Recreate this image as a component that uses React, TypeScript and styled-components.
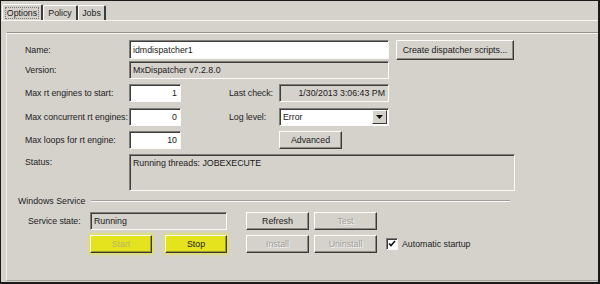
import React from "react";
import styled, { createGlobalStyle, css } from "styled-components";

const GlobalStyle = createGlobalStyle`
  html, body { margin: 0; padding: 0; background: #d5d2cc; }
  body { font-family: "Liberation Sans", Arial, sans-serif; font-size: 8.8px; color: #1a1a1a; }
  * { box-sizing: border-box; }
`;

const BG = "#d5d2cc";

const Window = styled.div`
  width: 600px;
  height: 284px;
  background: ${BG};
  border-style: solid;
  border-color: #1a1a1a;
  border-width: 1px 2px 2px 1px;
  display: flex;
  flex-direction: column;
`;

const TabStrip = styled.div`
  height: 19px;
  display: flex;
  align-items: flex-end;
  padding-left: 1px;
`;

const Tab = styled.div<{ $w: number; $active?: boolean }>`
  width: ${(p) => p.$w}px;
  height: ${(p) => (p.$active ? 16 : 15)}px;
  display: flex;
  align-items: center;
  justify-content: center;
  border-top: 1px solid #fff;
  border-left: 1px solid #fff;
  border-right: 2px solid #3c3c3c;
  border-radius: 2px 2px 0 0;
  color: #1a1a1a;
  ${(p) =>
    p.$active &&
    css`
      span {
        outline: 1px dotted #777;
        outline-offset: 0px;
        padding: 0 1px;
      }
    `}
`;

const TabPage = styled.div`
  flex: 1;
  display: flex;
  border-top: 1px solid #f7f6f3;
  padding: 11px 0 1px 5px;
`;

const Frame = styled.div`
  flex: 1;
  border-top: 1px solid #93918b;
  border-left: 1px solid #f2f1ee;
  border-bottom: 1px solid #a6a39d;
  box-shadow: inset 0 1px 0 #f7f6f3;
  padding: 7px 0 0 18px;
  display: flex;
  flex-direction: column;
`;

const Row = styled.div<{ $mt?: number; $h?: number; $top?: boolean; $ml?: number }>`
  display: flex;
  align-items: ${(p) => (p.$top ? "flex-start" : "center")};
  height: ${(p) => p.$h ?? 18}px;
  margin-top: ${(p) => p.$mt ?? 0}px;
  margin-left: ${(p) => p.$ml ?? 0}px;
  flex-shrink: 0;
`;

const Label = styled.div<{ $w: number; $ml?: number }>`
  width: ${(p) => p.$w}px;
  margin-left: ${(p) => p.$ml ?? 0}px;
  flex-shrink: 0;
  line-height: 16px;
  color: #222;
  white-space: nowrap;
  letter-spacing: -0.05px;
`;

const Field = styled.div<{ $w: number; $h?: number; $ro?: boolean; $right?: boolean; $ml?: number }>`
  width: ${(p) => p.$w}px;
  height: ${(p) => p.$h ?? 18}px;
  margin-left: ${(p) => p.$ml ?? 0}px;
  flex-shrink: 0;
  background: ${(p) => (p.$ro ? BG : "#fff")};
  border-top: 1px solid #7e7c78;
  border-left: 1px solid #7e7c78;
  border-bottom: 1px solid #fbfaf8;
  border-right: 1px solid #fbfaf8;
  box-shadow: inset 1px 1px 0 #3f3e3c;
  display: flex;
  align-items: ${(p) => (p.$h && p.$h > 24 ? "flex-start" : "center")};
  justify-content: ${(p) => (p.$right ? "flex-end" : "flex-start")};
  padding: ${(p) => (p.$h && p.$h > 24 ? "3px 3px 0 3px" : "0 3px")};
  color: #1a1a1a;
  white-space: nowrap;
  overflow: hidden;
`;

const Button = styled.div<{ $w: number; $h?: number; $ml?: number; $disabled?: boolean; $hl?: boolean }>`
  width: ${(p) => p.$w}px;
  height: ${(p) => p.$h ?? 18}px;
  margin-left: ${(p) => p.$ml ?? 0}px;
  flex-shrink: 0;
  background: ${(p) => (p.$hl ? "#e4e31e" : BG)};
  border-top: 1px solid #fdfdfb;
  border-left: 1px solid #fdfdfb;
  border-right: 1px solid #3a3a38;
  border-bottom: 1px solid #3a3a38;
  box-shadow: inset -1px -1px 0 #8c8a85;
  display: flex;
  align-items: center;
  justify-content: center;
  color: ${(p) => (p.$disabled ? (p.$hl ? "#b9b765" : "#a3a19b") : "#1a1a1a")};
  text-shadow: ${(p) => (p.$disabled && !p.$hl ? "1px 1px 0 #f4f3f0" : "none")};
  ${(p) =>
    p.$hl &&
    css`
      box-shadow: inset -1px -1px 0 #9a992a, 0 0 3px 1px #e8e63a;
    `}
  white-space: nowrap;
`;

const Select = styled(Field)`
  padding-right: 1px;
  justify-content: space-between;
`;

const DropBtn = styled.div`
  width: 15px;
  height: 14px;
  background: ${BG};
  border-top: 1px solid #fdfdfb;
  border-left: 1px solid #fdfdfb;
  border-right: 1px solid #3a3a38;
  border-bottom: 1px solid #3a3a38;
  display: flex;
  align-items: center;
  justify-content: center;
`;

const GroupHeader = styled.div`
  display: flex;
  align-items: center;
  height: 12px;
  width: 492px;
  margin-top: 4px;
  margin-left: -7px;
  flex-shrink: 0;
  color: #222;
`;

const GroupLine = styled.div`
  flex: 1;
  margin-left: 6px;
  border-top: 1px solid #a19f99;
  border-bottom: 1px solid #fbfaf8;
`;

const Check = styled.div`
  width: 12px;
  height: 12px;
  margin-left: 9px;
  flex-shrink: 0;
  background: #fff;
  border-top: 1px solid #7e7c78;
  border-left: 1px solid #7e7c78;
  border-bottom: 1px solid #fbfaf8;
  border-right: 1px solid #fbfaf8;
  box-shadow: inset 1px 1px 0 #3f3e3c;
  display: flex;
  align-items: center;
  justify-content: center;
`;

const CheckText = styled.span`
  margin-left: 4px;
  color: #222;
`;

export default function App() {
  return (
    <>
      <GlobalStyle />
      <Window>
        <TabStrip>
          <Tab $w={41} $active>
            <span>Options</span>
          </Tab>
          <Tab $w={35}>Policy</Tab>
          <Tab $w={28}>Jobs</Tab>
        </TabStrip>
        <TabPage>
          <Frame>
            <Row $h={19}>
              <Label $w={104}>Name:</Label>
              <Field $w={260} $h={19}>idmdispatcher1</Field>
              <Button $w={118} $h={20} $ml={7}>Create dispatcher scripts...</Button>
            </Row>
            <Row $mt={2}>
              <Label $w={104}>Version:</Label>
              <Field $w={260} $ro>MxDispatcher v7.2.8.0</Field>
            </Row>
            <Row $mt={5}>
              <Label $w={104}>Max rt engines to start:</Label>
              <Field $w={52} $right>1</Field>
              <Label $w={50} $ml={48}>Last check:</Label>
              <Field $w={110} $ro $right>1/30/2013 3:06:43 PM</Field>
            </Row>
            <Row $mt={6}>
              <Label $w={104}>Max concurrent rt engines:</Label>
              <Field $w={52} $right>0</Field>
              <Label $w={50} $ml={48}>Log level:</Label>
              <Select $w={110}>
                <span>Error</span>
                <DropBtn>
                  <svg width="7" height="4" viewBox="0 0 7 4">
                    <path d="M0 0h7L3.5 4z" fill="#111" />
                  </svg>
                </DropBtn>
              </Select>
            </Row>
            <Row $mt={5}>
              <Label $w={104}>Max loops for rt engine:</Label>
              <Field $w={52} $right>10</Field>
              <Button $w={63} $ml={98}>Advanced</Button>
            </Row>
            <Row $mt={5} $h={37} $top>
              <Label $w={104}>Status:</Label>
              <Field $w={386} $h={37} $ro>Running threads: JOBEXECUTE</Field>
            </Row>
            <GroupHeader>
              <span>Windows Service</span>
              <GroupLine />
            </GroupHeader>
            <Row $mt={5} $ml={3}>
              <Label $w={62}>Service state:</Label>
              <Field $w={137} $ro>Running</Field>
              <Button $w={63} $ml={19}>Refresh</Button>
              <Button $w={63} $ml={5} $disabled>Test</Button>
            </Row>
            <Row $mt={5} $ml={3}>
              <Label $w={62} />
              <Button $w={62} $hl $disabled>Start</Button>
              <Button $w={62} $ml={13} $hl>Stop</Button>
              <Button $w={63} $ml={19} $disabled>Install</Button>
              <Button $w={63} $ml={5} $disabled>Uninstall</Button>
              <Check>
                <svg width="8" height="8" viewBox="0 0 8 8">
                  <path d="M1 3.5l2 2 4-4.5" stroke="#111" strokeWidth="1.6" fill="none" />
                </svg>
              </Check>
              <CheckText>Automatic startup</CheckText>
            </Row>
          </Frame>
        </TabPage>
      </Window>
    </>
  );
}
